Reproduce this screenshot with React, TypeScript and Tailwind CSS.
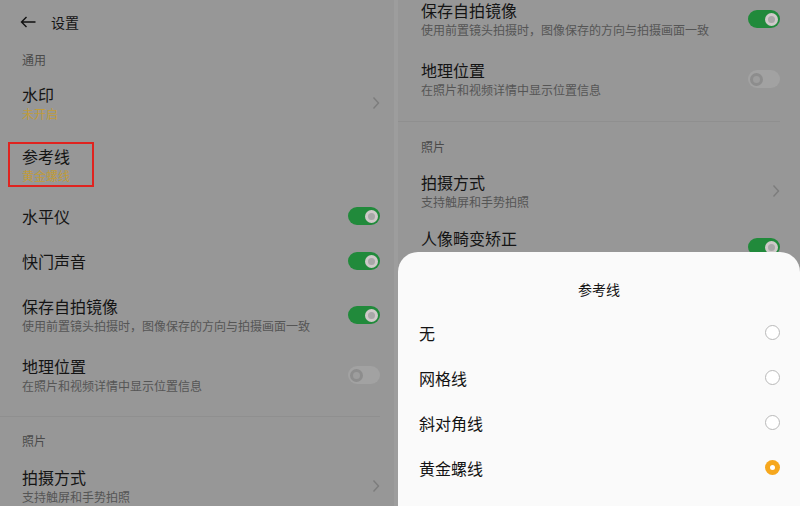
import React, { FC } from "react";

const font = { fontFamily: '"Noto Sans CJK SC", "Noto Sans", sans-serif' };

const Chevron: FC = () => (
  <svg width="8" height="14" viewBox="0 0 8 14" className="shrink-0">
    <polyline points="1.5,1.5 6.5,7 1.5,12.5" fill="none" stroke="#7c7c7c" strokeWidth="1.4" />
  </svg>
);

const Toggle: FC<{ on?: boolean }> = ({ on }) =>
  on ? (
    <div className="w-[32px] h-[18px] rounded-full bg-[#218a3b] flex items-center justify-end pr-[2px] shrink-0">
      <div className="w-[13px] h-[13px] rounded-full bg-[#a8a8a8] border-[3px] border-[#cfc9c9]" />
    </div>
  ) : (
    <div className="w-[32px] h-[18px] rounded-full bg-[#a2a2a2] flex items-center justify-start pl-[2px] shrink-0">
      <div className="w-[13px] h-[13px] rounded-full bg-[#9d9d9d] border-[3px] border-[#8d8d8d]" />
    </div>
  );

interface RowProps {
  title: string;
  sub?: string;
  gold?: boolean;
  right?: React.ReactNode;
  h: string;
}

const Row: FC<RowProps> = ({ title, sub, gold, right, h }) => (
  <div className={`flex items-center justify-between shrink-0 ${h}`}>
    <div className="flex flex-col">
      <div className="text-[16px] leading-[20px] text-[#141414] whitespace-nowrap">{title}</div>
      {sub && (
        <div
          className={`text-[12px] leading-[16px] mt-[2px] whitespace-nowrap ${gold ? "text-[#c09c3a]" : "text-[#555555]"}`}
        >
          {sub}
        </div>
      )}
    </div>
    {right}
  </div>
);

const Label: FC<{ text: string; h: string }> = ({ text, h }) => (
  <div className={`flex items-center shrink-0 text-[12px] text-[#4a4a4a] ${h}`}>{text}</div>
);

const App: FC = () => {
  return (
    <div className="w-[800px] h-[506px] overflow-hidden bg-[#979797] flex" style={font}>
      {/* left screen */}
      <div className="w-[394px] h-full overflow-hidden pl-[22px] pr-[14px]">
        <div className="h-[44px] flex items-center gap-[15px] -ml-[2px]">
          <svg width="16" height="12" viewBox="0 0 16 12">
            <path d="M15.5 6H1.5M6.5 1L1.5 6L6.5 11" fill="none" stroke="#111" strokeWidth="1.4" />
          </svg>
          <span className="text-[14px] text-[#141414]">设置</span>
        </div>
        <Label text="通用" h="h-[32px]" />
        <Row title="水印" sub="未开启" gold h="h-[54px]" right={<Chevron />} />
        <div className="h-[68px] flex items-center">
          <div className="-ml-[14px] w-[86px] h-[45px] border-2 border-[#e0231f] pl-[12px] pt-[2px] flex flex-col">
            <div className="text-[16px] leading-[20px] text-[#141414]">参考线</div>
            <div className="text-[12px] leading-[16px] mt-[2px] text-[#c09c3a]">黄金螺线</div>
          </div>
        </div>
        <Row title="水平仪" h="h-[36px]" right={<Toggle on />} />
        <Row title="快门声音" h="h-[54px]" right={<Toggle on />} />
        <Row title="保存自拍镜像" sub="使用前置镜头拍摄时，图像保存的方向与拍摄画面一致" h="h-[54px]" right={<Toggle on />} />
        <Row title="地理位置" sub="在照片和视频详情中显示位置信息" h="h-[66px]" right={<Toggle />} />
        <div className="h-[16px] flex items-center -ml-[22px]">
          <div className="h-px w-full bg-[#8f8f8f]" />
        </div>
        <Label text="照片" h="h-[34px]" />
        <Row title="拍摄方式" sub="支持触屏和手势拍照" h="h-[56px]" right={<Chevron />} />
      </div>

      <div className="w-[4px] h-full bg-[#9d9d9d]" />

      {/* right screen */}
      <div className="relative w-[402px] h-full overflow-hidden">
        <div className="pl-[23px] pr-[20px] -mt-[8px]">
          <Row title="保存自拍镜像" sub="使用前置镜头拍摄时，图像保存的方向与拍摄画面一致" h="h-[54px]" right={<Toggle on />} />
          <Row title="地理位置" sub="在照片和视频详情中显示位置信息" h="h-[66px]" right={<Toggle />} />
          <div className="h-[18px] flex items-center -ml-[23px]">
            <div className="h-px w-full bg-[#8f8f8f]" />
          </div>
          <Label text="照片" h="h-[34px]" />
          <Row title="拍摄方式" sub="支持触屏和手势拍照" h="h-[54px]" right={<Chevron />} />
          <Row title="人像畸变矫正" sub="自动矫正人像变形" h="h-[58px]" right={<Toggle on />} />
        </div>

        {/* bottom sheet */}
        <div className="absolute left-0 right-0 top-[252px] bottom-0 bg-[#fafafa] rounded-t-[20px] flex flex-col">
          <div className="h-[58px] pt-[28px] text-center text-[14px] leading-[18px] text-[#141414]">参考线</div>
          {["无", "网格线", "斜对角线", "黄金螺线"].map((t, i) => (
            <div key={t} className="h-[45px] flex items-center justify-between pl-[21px] pr-[20px]">
              <span className="text-[16px] text-[#141414]">{t}</span>
              {i === 3 ? (
                <div className="w-[15px] h-[15px] rounded-full bg-[#f6a71d] flex items-center justify-center">
                  <div className="w-[5px] h-[5px] rounded-full bg-white" />
                </div>
              ) : (
                <div className="w-[15px] h-[15px] rounded-full border border-[#b9b9b9] bg-white" />
              )}
            </div>
          ))}
        </div>
      </div>
    </div>
  );
};

export default App;
